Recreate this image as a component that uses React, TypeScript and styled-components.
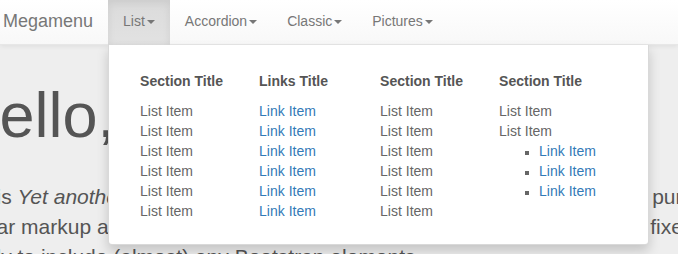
import React from "react"
import styled, { createGlobalStyle } from "styled-components"

const GlobalStyle = createGlobalStyle`
  html, body {
    margin: 0;
    padding: 0;
    background: #eee;
    overflow: hidden;
  }
  body {
    font-family: "Liberation Sans", Arial, sans-serif;
    font-size: 14px;
    line-height: 20px;
    color: #333;
  }
`

const Page = styled.div({
  width: '678px',
  height: '254px',
  overflow: 'hidden',
  background: '#eee',
})

const Navbar = styled.nav({
  position: 'relative',
  zIndex: 10,
  height: '45px',
  backgroundImage: 'linear-gradient(to bottom, #fff 0, #f8f8f8 100%)',
  borderBottom: '1px solid #e7e7e7',
  boxSizing: 'border-box',
  boxShadow: '0 1px 5px rgba(0,0,0,.075)',
})

const NavInner = styled.div({
  display: 'flex',
  height: '100%',
  marginLeft: '-12px',
})

const Brand = styled.div({
  padding: '11px 15px 0',
  fontSize: '18px',
  lineHeight: '20px',
  color: '#777',
})

const NavItem = styled.div<{ $active?: boolean }>(({ $active }) => ({
  position: 'relative',
  height: '45px',
  boxSizing: 'border-box',
  padding: '11px 15px 0',
  color: '#777',
  whiteSpace: 'nowrap',
  backgroundImage: $active ? 'linear-gradient(to bottom, #dbdbdb 0, #e2e2e2 100%)' : 'none',
  boxShadow: $active ? 'inset 0 3px 9px rgba(0,0,0,.075)' : 'none',
}))

const Caret = styled.span({
  display: 'inline-block',
  width: 0,
  height: 0,
  marginLeft: '2px',
  verticalAlign: 'middle',
  borderTop: '4px solid #777',
  borderLeft: '4px solid transparent',
  borderRight: '4px solid transparent',
})

const Dropdown = styled.div({
  position: 'absolute',
  top: '45px',
  left: 0,
  width: '541px',
  height: '200px',
  boxSizing: 'border-box',
  background: '#fff',
  border: '1px solid rgba(0,0,0,.15)',
  borderTop: 'none',
  borderRadius: '0 0 4px 4px',
  boxShadow: '0 6px 12px rgba(0,0,0,.175)',
  padding: '26px 0 0 31px',
  display: 'grid',
  gridTemplateColumns: '119px 121px 119px 120px',
  alignItems: 'start',
})

const Column = styled.div({
  display: 'flex',
  flexDirection: 'column',
})

const ColTitle = styled.div({
  fontWeight: 'bold',
  color: '#555',
  fontSize: '14px',
  lineHeight: '20px',
  marginBottom: '10px',
})

const Items = styled.ul({
  listStyle: 'none',
  margin: 0,
  padding: 0,
})

const SubItems = styled.ul({
  listStyleType: 'square',
  margin: 0,
  padding: '0 0 0 40px',
})

const Item = styled.li<{ $link?: boolean }>(({ $link }) => ({
  color: $link ? '#337ab7' : '#666',
  lineHeight: '20px',
  '&::marker': {
    color: '#666',
    fontSize: '12px',
  },
}))

const Jumbotron = styled.div({
  background: '#eee',
  marginLeft: '-46px',
  color: '#555',
  whiteSpace: 'nowrap',
})

const Heading = styled.h1({
  margin: '36px 0 0',
  fontSize: '63px',
  lineHeight: 1.1,
  fontWeight: 500,
})

const Lead = styled.p({
  margin: '32px 0 0 -3px',
  fontSize: '21px',
  lineHeight: '30px',
  fontWeight: 200,
})

const columns = [
  { title: 'Section Title', link: false, count: 6 },
  { title: 'Links Title', link: true, count: 6 },
  { title: 'Section Title', link: false, count: 6 },
]

export default function App() {
  return (
    <Page>
      <GlobalStyle />
      <Navbar>
        <NavInner>
          <Brand>Megamenu</Brand>
          <NavItem $active>
            List<Caret />
            <Dropdown>
              {columns.map((c, i) => (
                <Column key={i}>
                  <ColTitle>{c.title}</ColTitle>
                  <Items>
                    {Array.from({ length: c.count }).map((_, j) => (
                      <Item key={j} $link={c.link}>{c.link ? 'Link Item' : 'List Item'}</Item>
                    ))}
                  </Items>
                </Column>
              ))}
              <Column>
                <ColTitle>Section Title</ColTitle>
                <Items>
                  <Item>List Item</Item>
                  <Item>
                    List Item
                    <SubItems>
                      <Item $link>Link Item</Item>
                      <Item $link>Link Item</Item>
                      <Item $link>Link Item</Item>
                    </SubItems>
                  </Item>
                </Items>
              </Column>
            </Dropdown>
          </NavItem>
          <NavItem>Accordion<Caret /></NavItem>
          <NavItem>Classic<Caret /></NavItem>
          <NavItem>Pictures<Caret /></NavItem>
        </NavInner>
      </Navbar>
      <Jumbotron>
        <Heading>Hello, world!</Heading>
        <Lead>
          This is <em>Yet another megamenu for Bootstrap 3</em> via Twitter. Lightweight, also pure CSS megamenu
          <br />
          navbar markup and the fluid grid system classes of Bootstrap 3. Made with fixed and responsive layouts
          <br />
          Ready to include (almost) any Bootstrap elements.
        </Lead>
      </Jumbotron>
    </Page>
  )
}
